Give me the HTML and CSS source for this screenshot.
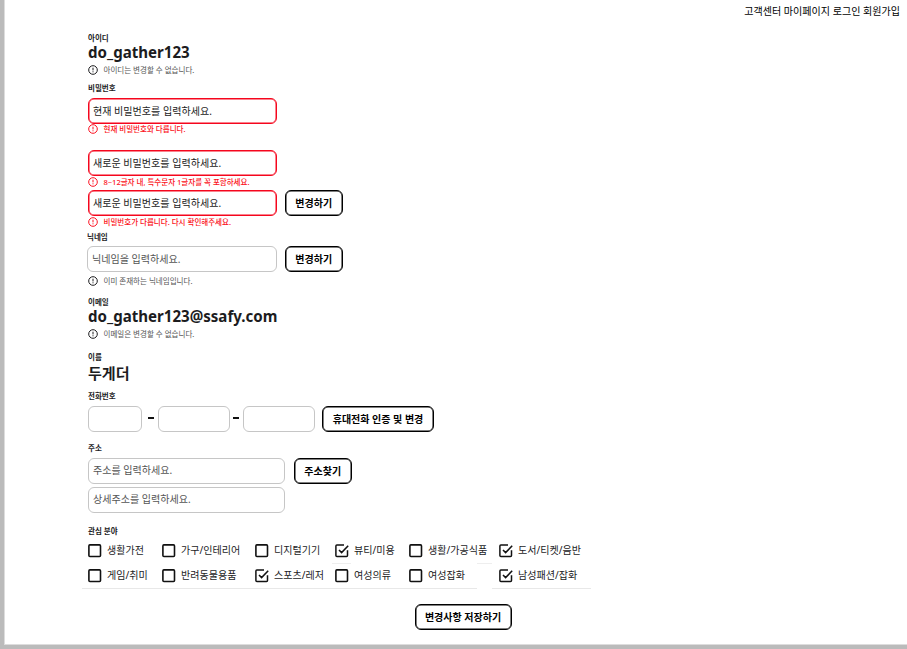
FILE: index.html
```html
<!DOCTYPE html>
<html lang="ko">
<head>
<meta charset="utf-8">
<title>회원정보 수정</title>
<link rel="stylesheet" href="styles.css">
</head>
<body>
<svg class="defs" width="0" height="0">
  <symbol id="alert" viewBox="0 0 10 10"><g fill="none" stroke="currentColor"><circle cx="5" cy="5" r="4.3" stroke-width="1"/><path d="M5 2.7v2.7M5 6.3v1"/></g></symbol>
  <symbol id="box" viewBox="0 0 14 14"><rect x=".9" y=".9" width="11.6" height="11.6" rx="1" fill="none" stroke="currentColor" stroke-width="1.6"/></symbol>
  <symbol id="checked" viewBox="0 0 14 14"><path d="M9 .9H1.9q-1 0-1 1v9.6q0 1 1 1h9.6q1 0 1-1V6.2M4 6l2.6 2.6 6.6-6.8" fill="none" stroke="currentColor" stroke-width="1.5"/></symbol>
</svg>
<main class="page">
  <nav class="nav"><a>고객센터</a> <a>마이페이지</a> <a>로그인</a> <a>회원가입</a></nav>
  <form class="form">
    <section class="account">
      <h2 class="label">아이디</h2>
      <p class="value">do_gather123</p>
      <p class="hint"><svg><use href="#alert"/></svg>아이디는 변경할 수 없습니다.</p>
    </section>
    <section class="password">
      <h2 class="label">비밀번호</h2>
      <div class="field error">현재 비밀번호를 입력하세요.</div>
      <p class="hint error-text"><svg><use href="#alert"/></svg>현재 비밀번호와 다릅니다.</p>
      <div class="field error new">새로운 비밀번호를 입력하세요.</div>
      <p class="hint error-text"><svg><use href="#alert"/></svg>8~12글자 내, 특수문자 1글자를 꼭 포함하세요.</p>
      <div class="row confirm"><div class="field error">새로운 비밀번호를 입력하세요.</div><button type="button" class="btn">변경하기</button></div>
      <p class="hint error-text"><svg><use href="#alert"/></svg>비밀번호가 다릅니다. 다시 확인해주세요.</p>
    </section>
    <section class="nickname">
      <h2 class="label">닉네임</h2>
      <div class="row"><div class="field">닉네임을 입력하세요.</div><button type="button" class="btn">변경하기</button></div>
      <p class="hint"><svg><use href="#alert"/></svg>이미 존재하는 닉네임입니다.</p>
    </section>
    <section class="email">
      <h2 class="label">이메일</h2>
      <p class="value">do_gather123@ssafy.com</p>
      <p class="hint"><svg><use href="#alert"/></svg>이메일은 변경할 수 없습니다.</p>
    </section>
    <section class="name">
      <h2 class="label">이름</h2>
      <p class="value">두게더</p>
    </section>
    <section class="phone">
      <h2 class="label">전화번호</h2>
      <div class="row"><div class="field"></div><i class="dash"></i><div class="field"></div><i class="dash"></i><div class="field"></div><button type="button" class="btn">휴대전화 인증 및 변경</button></div>
    </section>
    <section class="address">
      <h2 class="label">주소</h2>
      <div class="row"><div class="field">주소를 입력하세요.</div><button type="button" class="btn">주소찾기</button></div>
      <div class="field detail">상세주소를 입력하세요.</div>
    </section>
    <section class="interests">
      <h2 class="label">관심 분야</h2>
      <div class="checks">
        <label><svg><use href="#box"/></svg>생활가전</label>
        <label><svg><use href="#box"/></svg>가구/인테리어</label>
        <label><svg><use href="#box"/></svg>디지털기기</label>
        <label><svg><use href="#checked"/></svg>뷰티/미용</label>
        <label><svg><use href="#box"/></svg>생활/가공식품</label>
        <label><svg><use href="#checked"/></svg>도서/티켓/음반</label>
        <label><svg><use href="#box"/></svg>게임/취미</label>
        <label><svg><use href="#box"/></svg>반려동물용품</label>
        <label><svg><use href="#checked"/></svg>스포츠/레저</label>
        <label><svg><use href="#box"/></svg>여성의류</label>
        <label><svg><use href="#box"/></svg>여성잡화</label>
        <label><svg><use href="#checked"/></svg>남성패션/잡화</label>
      </div>
    </section>
    <button type="button" class="btn save">변경사항 저장하기</button>
  </form>
</main>
</body>
</html>
```
FILE: styles.css
```css
* { box-sizing: border-box; }
body { margin: 0; background: #bbb; font-family: "Noto Sans", "Noto Sans CJK KR", sans-serif; color: #1c1c1e; }
h2, p { margin: 0; }
.defs { display: block; height: 0; }
.page { height: 645px; margin-left: 4px; background: #fff; border-left: 1px solid #ddd; border-bottom: 1px solid #ddd; overflow: hidden; }
.nav { height: 24px; padding-right: 7px; text-align: right; font-size: 10.05px; line-height: 23px; color: #000; white-space: nowrap; }
.form { padding: 9px 0 0 83px; }
.label { height: 10px; font-size: 7.5px; line-height: 10px; font-weight: 700; white-space: nowrap; }
.value { height: 19px; font-size: 15.08px; line-height: 19px; font-weight: 700; white-space: nowrap; }
.hint { display: flex; align-items: center; height: 10px; font-size: 7.53px; line-height: 10px; color: #555; white-space: nowrap; }
.hint svg { width: 10px; height: 10px; margin-right: 5.5px; color: #1c1c1e; }
.account .hint, .email .hint { margin-top: 3px; }
.error-text, .error-text svg { color: #fb1020; }
.error-text { font-weight: 500; }
.row { display: flex; align-items: center; }
.field { width: 189px; height: 26px; padding-left: 4px; border: 1px solid #c6c6c6; border-radius: 6px; font-size: 10.05px; line-height: 24px; color: #555; white-space: nowrap; }
.field.error { border-color: #f5061d; box-shadow: inset 0 0 0 .5px #f5061d; color: #222; }
.btn { width: 57.5px; height: 26px; margin-left: 8px; padding: 0; border: 1px solid #000; box-shadow: inset 0 0 0 .5px #000; border-radius: 6px; background: #fff; font: 700 10px/22px "Noto Sans", "Noto Sans CJK KR", sans-serif; color: #000; white-space: nowrap; }
.password { margin-top: 8px; }
.password .label { margin-bottom: 5px; }
.password .hint { margin-top: 1px; }
.password > .field:not(.new) + .hint { margin-top: 0; }
.password .new { margin-top: 16px; }
.password .confirm { margin-top: 3px; }
.nickname { margin-top: 5px; margin-left: -1px; }
.nickname .row { margin-top: 4px; }
.nickname .field { width: 190px; }
.nickname .hint { margin-top: 4px; padding-left: 1px; }
.email { margin-top: 11px; }
.name { margin-top: 13px; }
.name .value { margin-top: 2px; }
.phone { margin-top: 8px; }
.phone .row { margin-top: 5px; }
.phone .field { width: 72px; }
.phone .field:first-child { width: 54px; }
.phone .dash { width: 6px; height: 2px; margin: 0 4px 2px 3px; background: #111; }
.phone .field:first-child + .dash { margin-left: 6px; }
.phone .btn { width: 112px; margin-left: 7px; }
.address { margin-top: 11px; }
.address .row { margin-top: 5px; }
.address .field { width: 197px; line-height: 23px; }
.address .btn { margin-left: 9px; }
.address .detail { margin-top: 3px; }
.interests { margin-top: 13px; }
.checks { display: grid; grid-template-columns: 74px 93px 80px 74px 90px 92px; grid-template-rows: 25px 25px; width: 509px; height: 51px; margin: 2px 0 0 -6px; padding-left: 6px;
  background: linear-gradient(#e8e8e8, #e8e8e8) 0 100% / 395px 1px, linear-gradient(#e8e8e8, #e8e8e8) 100% 100% / 99px 1px, linear-gradient(#eee, #eee) 250px 25px / 19px 1px, linear-gradient(#eee, #eee) 395px 25px / 15px 1px;
  background-repeat: no-repeat; }
.checks label { display: flex; align-items: center; font-size: 10.05px; line-height: 25px; white-space: nowrap; }
.checks svg { flex: none; width: 14px; height: 14px; margin-right: 5px; color: #111; }
.save { display: block; width: 97px; margin: 15px 0 0 326.5px; }
```
